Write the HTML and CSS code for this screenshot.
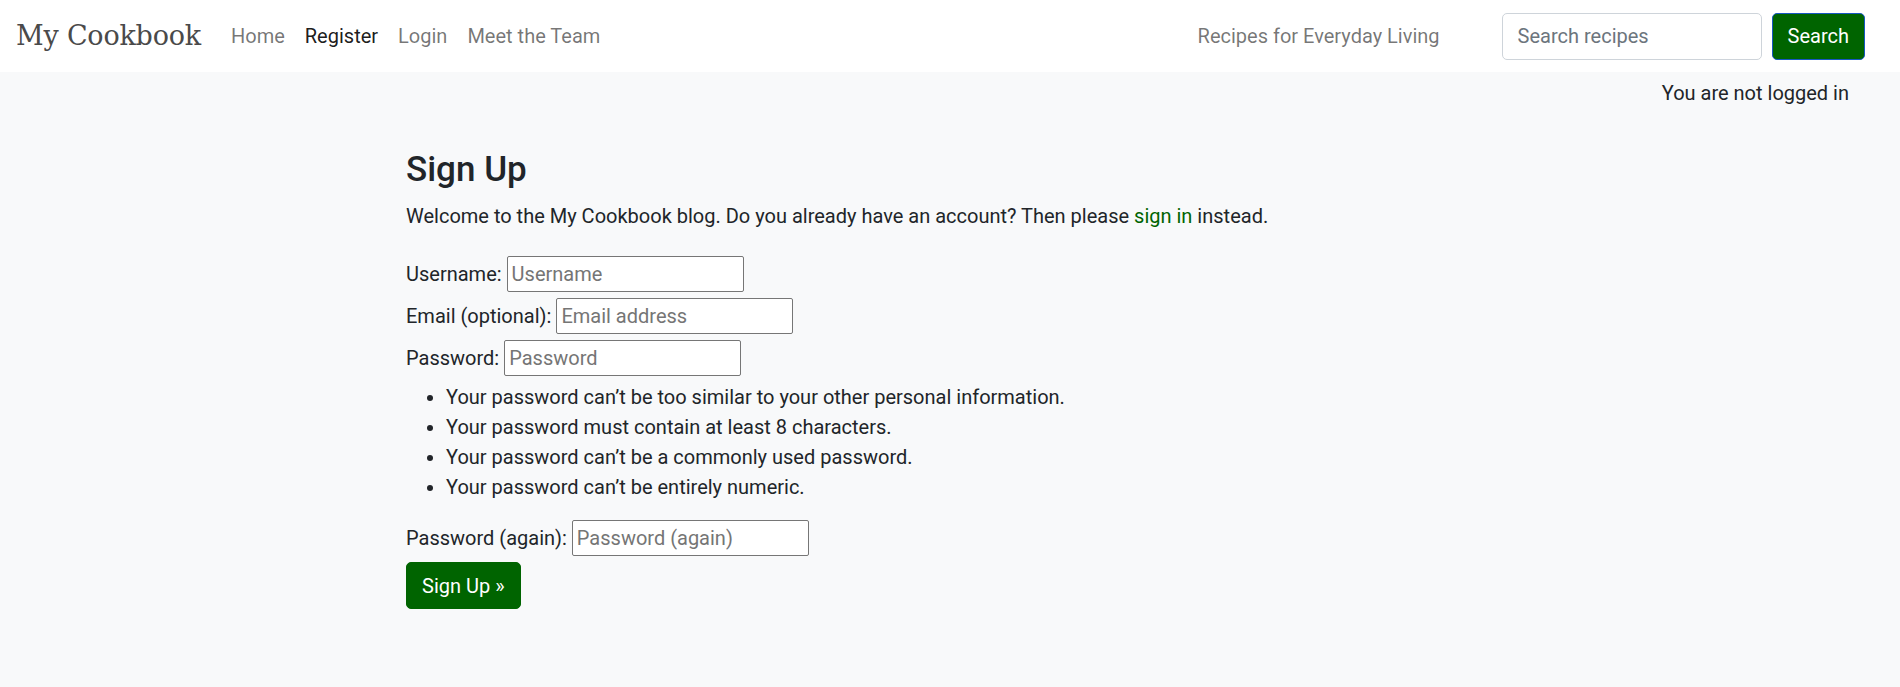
FILE: index.html
```html
<!DOCTYPE html>
<html lang="en">
<head>
<meta charset="utf-8">
<title>My Cookbook - Sign Up</title>
<link rel="stylesheet" href="styles.css">
</head>
<body>
<header class="navbar">
  <a class="brand" href="#">My Cookbook</a>
  <nav class="nav">
    <a class="nav-link" href="#">Home</a>
    <a class="nav-link active" href="#">Register</a>
    <a class="nav-link" href="#">Login</a>
    <a class="nav-link" href="#">Meet the Team</a>
  </nav>
  <span class="tagline">Recipes for Everyday Living</span>
  <form class="search">
    <input class="search-input" type="text" placeholder="Search recipes">
    <button class="btn btn-search" type="button">Search</button>
  </form>
</header>
<div class="status">You are not logged in</div>
<main class="container">
  <h1 class="title">Sign Up</h1>
  <p class="intro">Welcome to the My Cookbook blog. Do you already have an account? Then please <a class="link" href="#">sign in</a> instead.</p>
  <form class="signup">
    <div class="row"><label>Username:</label><input class="field" type="text" placeholder="Username"></div>
    <div class="row"><label>Email (optional):</label><input class="field" type="text" placeholder="Email address"></div>
    <div class="row"><label>Password:</label><input class="field" type="password" placeholder="Password"></div>
    <ul class="help">
      <li>Your password can’t be too similar to your other personal information.</li>
      <li>Your password must contain at least 8 characters.</li>
      <li>Your password can’t be a commonly used password.</li>
      <li>Your password can’t be entirely numeric.</li>
    </ul>
    <div class="row"><label>Password (again):</label><input class="field" type="password" placeholder="Password (again)"></div>
    <button class="btn btn-primary" type="button">Sign Up »</button>
  </form>
</main>
</body>
</html>
```
FILE: styles.css
```css
* { box-sizing: border-box; }
html, body { margin: 0; padding: 0; }
body {
  background: #f8f9fa;
  color: #212529;
  font-family: Roboto, "Liberation Sans", sans-serif;
  font-size: 20px;
  line-height: 1.5;
}
a { text-decoration: none; }

.navbar {
  background: #fff;
  height: 72px;
  display: flex;
  align-items: center;
  padding: 0 35px 0 16px;
}
.brand {
  font-family: "DejaVu Serif", "Liberation Serif", serif;
  font-size: 27px;
  color: #4a4a4a;
  margin-right: 20px;
  letter-spacing: -0.2px;
}
.nav { display: flex; }
.nav-link {
  color: rgba(0,0,0,.55);
  padding: 0 10px;
}
.nav-link.active { color: rgba(0,0,0,.9); }
.tagline {
  margin-left: auto;
  margin-right: 62px;
  color: rgba(0,0,0,.55);
}
.search { display: flex; gap: 10px; }
.search-input {
  width: 260px;
  height: 47px;
  border: 1px solid #ced4da;
  border-radius: 5px;
  padding: 0 15px;
  font: inherit;
  color: #212529;
  background: #fff;
}
.search-input::placeholder { color: #6c757d; }
.btn {
  font: inherit;
  color: #fff;
  background: #006400;
  border-radius: 5px;
  height: 47px;
  padding: 0 15px;
  white-space: nowrap;
  cursor: pointer;
}
.btn-search { border: 1px solid #1757c2; }
.btn-primary { border: 1px solid #006400; margin-top: 3px; }

.status {
  text-align: right;
  padding-right: 51px;
  margin-top: 6px;
  line-height: 30px;
}
.container {
  width: 1088px;
  margin: 0 auto;
}
.title {
  font-size: 35px;
  font-weight: 500;
  line-height: 1.2;
  margin: 41px 0 10px;
}
.intro { margin: 0 0 22px; line-height: 30px; }
.link { color: #006400; }
.signup { display: flex; flex-direction: column; align-items: flex-start; }
.row {
  display: flex;
  align-items: center;
  gap: 5px;
  height: 42px;
}
.field {
  width: 237px;
  height: 36px;
  border: 1px solid #767676;
  border-radius: 2px;
  padding: 1px 4px;
  font: inherit;
  background: #fff;
  color: #212529;
}
.field::placeholder { color: #757575; }
.help {
  margin: 3px 0 15px;
  padding-left: 40px;
  line-height: 30px;
}
```
